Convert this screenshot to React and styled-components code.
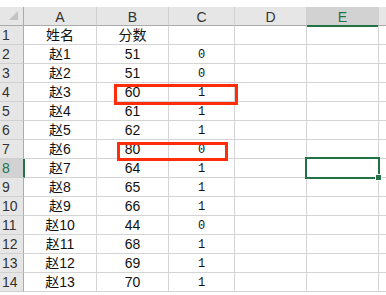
import React from 'react';
import styled, { createGlobalStyle } from 'styled-components';

const GlobalStyle = createGlobalStyle`
  html, body { margin: 0; padding: 0; background: #fff; }
  body { font-family: "Liberation Sans", "Noto Sans CJK SC", sans-serif; overflow: hidden; }
`;

const Sheet = styled.div`
  position: relative;
  width: 386px;
  height: 295px;
  padding-top: 7px;
  box-sizing: border-box;
  overflow: hidden;
`;

const Grid = styled.div`
  display: grid;
  grid-template-columns: 24px 73px 72px 66px 72px 72px 20px;
  grid-auto-rows: 19px;
`;

const Corner = styled.div`
  position: relative;
  background: #e6e6e6;
  border-right: 1px solid #ababab;
  border-bottom: 1px solid #ababab;
  box-sizing: border-box;
  &::after {
    content: '';
    position: absolute;
    right: 5px;
    bottom: 5px;
    border-style: solid;
    border-width: 0 0 9px 9px;
    border-color: transparent transparent #c3c3c3 transparent;
  }
`;

const ColHead = styled.div`
  background: ${p => (p.$active ? '#d2d2d2' : '#e6e6e6')};
  color: ${p => (p.$active ? '#217346' : '#333')};
  border-right: 1px solid #d0d0d0;
  border-bottom: ${p => (p.$active ? '2px solid #217346' : '1px solid #ababab')};
  margin-bottom: ${p => (p.$active ? '-1px' : '0')};
  box-sizing: border-box;
  font-size: 14px;
  display: flex;
  align-items: center;
  justify-content: center;
  padding-top: 1px;
`;

const RowHead = styled.div`
  background: ${p => (p.$active ? '#d2d2d2' : '#e6e6e6')};
  color: ${p => (p.$active ? '#217346' : '#333')};
  border-right: ${p => (p.$active ? '2px solid #217346' : '1px solid #ababab')};
  margin-right: ${p => (p.$active ? '-1px' : '0')};
  border-bottom: 1px solid #d0d0d0;
  box-sizing: border-box;
  font-size: 14px;
  line-height: 18px;
  padding-left: 2px;
  position: relative;
  z-index: 1;
`;

const Cell = styled.div`
  border-right: 1px solid #d4d4d4;
  border-bottom: 1px solid #d4d4d4;
  box-sizing: border-box;
  color: #111;
  font-size: ${p => (p.$mono ? '12px' : '14px')};
  font-family: ${p => (p.$mono ? '"Liberation Mono", "DejaVu Sans Mono", monospace' : '"Liberation Sans", "Noto Sans CJK SC", sans-serif')};
  display: flex;
  align-items: flex-end;
  justify-content: center;
  padding-bottom: ${p => (p.$mono ? '0' : '1px')};
  line-height: ${p => (p.$mono ? '15px' : '16px')};
  white-space: nowrap;
`;

const Mark = styled.div`
  position: absolute;
  box-sizing: border-box;
  border: ${p => p.$w}px solid #ff2d0a;
  pointer-events: none;
`;

const Selection = styled.div`
  position: absolute;
  left: 305px;
  top: 157px;
  width: 75px;
  height: 22px;
  box-sizing: border-box;
  border: 2px solid #217346;
  z-index: 2;
`;

const Handle = styled.div`
  position: absolute;
  right: -4px;
  bottom: -4px;
  width: 5px;
  height: 5px;
  background: #217346;
  border: 1px solid #fff;
`;

const cols = ['A', 'B', 'C', 'D', 'E', ''];

const rows = [
  ['姓名', '分数', ''],
  ['赵1', '51', '0'],
  ['赵2', '51', '0'],
  ['赵3', '60', '1'],
  ['赵4', '61', '1'],
  ['赵5', '62', '1'],
  ['赵6', '80', '0'],
  ['赵7', '64', '1'],
  ['赵8', '65', '1'],
  ['赵9', '66', '1'],
  ['赵10', '44', '0'],
  ['赵11', '68', '1'],
  ['赵12', '69', '1'],
  ['赵13', '70', '1'],
];

const App = () => {
  return (
    <Sheet>
      <GlobalStyle />
      <Grid>
        <Corner />
        {cols.map((c, i) => (
          <ColHead key={i} $active={c === 'E'}>{c}</ColHead>
        ))}
        {rows.map((r, i) => (
          <React.Fragment key={i}>
            <RowHead $active={i === 7}>{i + 1}</RowHead>
            <Cell>{r[0]}</Cell>
            <Cell>{r[1]}</Cell>
            <Cell $mono>{r[2]}</Cell>
            <Cell />
            <Cell />
            <Cell />
          </React.Fragment>
        ))}
      </Grid>
      <Mark $w={3} style={{ left: 114, top: 84, width: 124, height: 21 }} />
      <Mark $w={3} style={{ left: 117, top: 142, width: 111, height: 19 }} />
      <Selection>
        <Handle />
      </Selection>
    </Sheet>
  );
};

export default App;
